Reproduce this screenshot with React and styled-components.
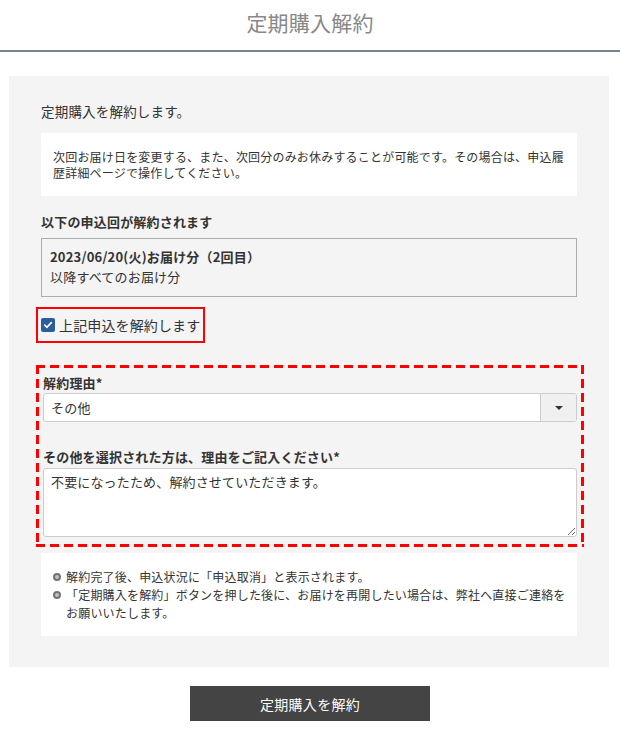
import React from 'react';
import styled, { createGlobalStyle } from 'styled-components';

const GlobalStyle = createGlobalStyle`
  body {
    margin: 0;
    background: #fff;
    color: #333;
    font-family: "Noto Sans CJK JP", "Noto Sans", sans-serif;
    letter-spacing: 0.012em;
  }
`;

const Page = styled.div`
  width: 620px;
  padding-bottom: 20px;
`;

const Header = styled.header`
  height: 50px;
  border-bottom: 2px solid #7b848b;
  display: flex;
  align-items: center;
  justify-content: center;
`;

const PageTitle = styled.h1`
  margin: 0 0 6px;
  font-size: 21px;
  font-weight: 400;
  color: #888;
`;

const Panel = styled.section`
  width: 600px;
  box-sizing: border-box;
  margin: 24px 0 0 9px;
  background: #f4f4f4;
  padding: 25px 32px 31px;
`;

const Lead = styled.p`
  margin: 0;
  font-size: 13.5px;
  line-height: 20px;
`;

const InfoBox = styled.div`
  margin-top: ${p => p.$mt || 0}px;
  background: #fff;
  padding: ${p => p.$pad};
  font-size: 12px;
  line-height: ${p => p.$lh || 16}px;
`;

const SectionLabel = styled.div`
  margin-top: ${p => p.$mt || 0}px;
  font-size: 13px;
  font-weight: 700;
  line-height: 18px;
`;

const TargetBox = styled.div`
  margin-top: 7px;
  border: 1px solid #acacac;
  padding: 8px 8px 9px;
  font-size: 13px;
  line-height: 20px;
`;

const Strong = styled.div`
  font-weight: 700;
`;

const CheckFrame = styled.label`
  display: inline-flex;
  align-items: center;
  gap: 4px;
  margin: 10px 0 0 -5px;
  border: 2px solid #f00;
  height: 32px;
  padding: 0 3px;
  font-size: 14px;
  letter-spacing: 0.01em;
`;

const CheckBox = styled.span`
  width: 14px;
  height: 14px;
  border-radius: 2px;
  background: #2b5d9c;
  display: flex;
  align-items: center;
  justify-content: center;
`;

const dashH = 'repeating-linear-gradient(90deg, #f00 0 9px, transparent 9px 14px)';
const dashV = 'repeating-linear-gradient(180deg, #f00 0 9px, transparent 9px 14px)';

const DashedArea = styled.div`
  margin: 22px -7px 0 -5px;
  padding: 9px 7px 10px 7px;
  background:
    ${dashH} left top / 100% 3px no-repeat,
    ${dashH} left bottom / 100% 3px no-repeat,
    ${dashV} left top / 3px 100% no-repeat,
    ${dashV} right top / 3px 100% no-repeat;
`;

const SelectBox = styled.div`
  margin-top: 1px;
  height: 29px;
  box-sizing: border-box;
  border: 1px solid #ccc;
  border-radius: 3px;
  background: #fff;
  display: flex;
  font-size: 13px;
`;

const SelectValue = styled.div`
  flex: 1;
  display: flex;
  align-items: center;
  padding-left: 7px;
`;

const SelectButton = styled.div`
  width: 35px;
  border-left: 1px solid #ccc;
  background: #f0f0f0;
  border-radius: 0 3px 3px 0;
  display: flex;
  align-items: center;
  justify-content: center;
`;

const TextArea = styled.textarea`
  display: block;
  margin-top: 2px;
  width: 100%;
  height: 69px;
  box-sizing: border-box;
  border: 1px solid #ccc;
  border-radius: 3px;
  padding: 4px 7px;
  font-family: inherit;
  font-size: 13px;
  line-height: 18px;
  letter-spacing: 0.012em;
  color: #333;
  resize: vertical;
  outline: none;
`;

const NoteList = styled.ul`
  list-style: none;
  margin: 0;
  padding: 0;
`;

const NoteItem = styled.li`
  position: relative;
  padding-left: 13px;
  &::before {
    content: '';
    position: absolute;
    left: 0;
    top: 5px;
    width: 4px;
    height: 4px;
    border-radius: 50%;
    border: 2px solid #707478;
    background: #bfc2c5;
  }
`;

const Actions = styled.div`
  display: flex;
  justify-content: center;
  margin-top: 19px;
`;

const SubmitButton = styled.button`
  width: 240px;
  height: 35px;
  border: none;
  background: #444;
  color: #fff;
  font-family: inherit;
  font-size: 14px;
  letter-spacing: 0.02em;
  cursor: pointer;
`;

export default function App() {
  return (
    <Page>
      <GlobalStyle />
      <Header>
        <PageTitle>定期購入解約</PageTitle>
      </Header>
      <Panel>
        <Lead>定期購入を解約します。</Lead>
        <InfoBox $mt={12} $pad="16px 12px 15px">
          次回お届け日を変更する、また、次回分のみお休みすることが可能です。その場合は、申込履歴詳細ページで操作してください。
        </InfoBox>

        <SectionLabel $mt={17}>以下の申込回が解約されます</SectionLabel>
        <TargetBox>
          <Strong>2023/06/20(火)お届け分（2回目）</Strong>
          <div>以降すべてのお届け分</div>
        </TargetBox>

        <CheckFrame>
          <CheckBox>
            <svg width="10" height="10" viewBox="0 0 10 10">
              <path d="M1.8 5.2 L4 7.3 L8.3 2.6" fill="none" stroke="#fff" strokeWidth="1.7" strokeLinecap="round" strokeLinejoin="round" />
            </svg>
          </CheckBox>
          上記申込を解約します
        </CheckFrame>

        <DashedArea>
          <SectionLabel>解約理由*</SectionLabel>
          <SelectBox>
            <SelectValue>その他</SelectValue>
            <SelectButton>
              <svg width="8" height="4" viewBox="0 0 8 4">
                <path d="M0 0 H8 L4 4 Z" fill="#333" />
              </svg>
            </SelectButton>
          </SelectBox>
          <SectionLabel $mt={26}>その他を選択された方は、理由をご記入ください*</SectionLabel>
          <TextArea readOnly defaultValue="不要になったため、解約させていただきます。" />
        </DashedArea>

        <InfoBox $mt={6} $pad="15px 6px 14px 12px" $lh={18}>
          <NoteList>
            <NoteItem>解約完了後、申込状況に「申込取消」と表示されます。</NoteItem>
            <NoteItem>「定期購入を解約」ボタンを押した後に、お届けを再開したい場合は、弊社へ直接ご連絡をお願いいたします。</NoteItem>
          </NoteList>
        </InfoBox>
      </Panel>
      <Actions>
        <SubmitButton>定期購入を解約</SubmitButton>
      </Actions>
    </Page>
  );
}
